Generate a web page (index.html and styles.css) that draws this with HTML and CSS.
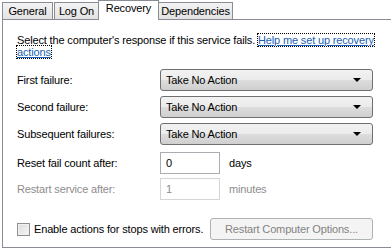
FILE: index.html
```html
<!DOCTYPE html>
<html>
<head>
<meta charset="utf-8">
<link rel="stylesheet" href="styles.css">
</head>
<body>
<div class="dialog">
  <div class="tabs">
    <div class="tab t-general">General</div>
    <div class="tab t-logon">Log On</div>
    <div class="tab sel t-recovery">Recovery</div>
    <div class="tab t-deps">Dependencies</div>
  </div>
  <div class="panel">
    <p class="intro">Select the computer's response if this service fails. <a class="link" href="#">Help me set up recovery</a><br><a class="link" href="#">actions</a></p>
    <div class="row r1">
      <span class="label">First failure:</span>
      <div class="combo"><span>Take No Action</span><i class="arrow"></i></div>
    </div>
    <div class="row">
      <span class="label">Second failure:</span>
      <div class="combo"><span>Take No Action</span><i class="arrow"></i></div>
    </div>
    <div class="row">
      <span class="label">Subsequent failures:</span>
      <div class="combo"><span>Take No Action</span><i class="arrow"></i></div>
    </div>
    <div class="row r4">
      <span class="label">Reset fail count after:</span>
      <div class="input">0</div>
      <span class="unit">days</span>
    </div>
    <div class="row r5 disabled">
      <span class="label">Restart service after:</span>
      <div class="input">1</div>
      <span class="unit">minutes</span>
    </div>
    <div class="bottom">
      <label class="check"><span class="box"></span>Enable actions for stops with errors.</label>
      <div class="button">Restart Computer Options...</div>
    </div>
  </div>
</div>
</body>
</html>
```

FILE: styles.css
```css
html, body {
  margin: 0;
  padding: 0;
  background: #ffffff;
}
body {
  width: 391px;
  height: 248px;
  overflow: hidden;
  font-family: "Liberation Sans", Arial, sans-serif;
  font-size: 11px;
  letter-spacing: -0.15px;
  color: #000;
}
.dialog {
  padding-left: 2px;
}
.tabs {
  display: flex;
  align-items: flex-end;
  height: 19px;
  position: relative;
  z-index: 1;
}
.tab {
  box-sizing: border-box;
  height: 17px;
  border: 1px solid #898c95;
  border-bottom: none;
  background: linear-gradient(#f3f3f3, #e3e3e3);
  margin-right: 1px;
  padding-top: 2px;
  text-align: center;
  line-height: 13px;
  white-space: nowrap;
}
.t-general { width: 51px; }
.t-logon { width: 45px; }
.t-recovery { width: 61px; }
.t-deps { width: 75px; }
.tab.sel {
  height: 20px;
  margin-left: -2px;
  margin-right: -1px;
  background: #fff;
  padding-top: 1px;
  margin-bottom: -1px;
}
.panel {
  box-sizing: border-box;
  height: 229px;
  border-left: 1px solid #898c95;
  border-top: 1px solid #898c95;
  border-bottom: 1px solid #898c95;
  padding: 14px 0 0 14px;
}
.intro {
  margin: 0;
  width: 360px;
  line-height: 12px;
}
.link {
  color: #1a5fb4;
  text-decoration: underline;
  outline: 1px dotted #000;
}
.row {
  display: flex;
  align-items: center;
  height: 22px;
  margin-top: 5px;
}
.row.r1 { margin-top: 11px; }
.row.r4 { margin-top: 7px; }
.row.r5 { margin-top: 4px; }
.label {
  width: 143px;
}
.combo {
  box-sizing: border-box;
  width: 213px;
  height: 22px;
  border: 1px solid #707070;
  border-radius: 3px;
  background: linear-gradient(#f2f2f2 0%, #ebebeb 50%, #dddddd 51%, #cfcfcf 100%);
  display: flex;
  align-items: center;
  justify-content: space-between;
  padding: 0 11px 0 5px;
}
.arrow {
  width: 0;
  height: 0;
  border-left: 4px solid transparent;
  border-right: 4px solid transparent;
  border-top: 4px solid #000;
}
.input {
  box-sizing: border-box;
  width: 60px;
  height: 22px;
  border: 1px solid #abadb3;
  padding: 4px 0 0 5px;
  background: #fff;
}
.unit {
  margin-left: 9px;
}
.disabled .label, .disabled .unit, .disabled .input {
  color: #8d8d8d;
}
.disabled .input {
  border-color: #d5d5d5;
}
.bottom {
  display: flex;
  align-items: center;
  margin-top: 18px;
}
.check {
  display: flex;
  align-items: center;
  width: 193px;
  white-space: nowrap;
}
.box {
  box-sizing: border-box;
  width: 13px;
  height: 13px;
  border: 1px solid #8e8f8f;
  background: linear-gradient(135deg, #dcdcdc, #f6f6f6);
  margin-right: 4px;
  box-shadow: inset 0 0 0 1px #f0f0f0;
  flex: none;
}
.button {
  box-sizing: border-box;
  width: 163px;
  height: 22px;
  border: 1px solid #adb2b5;
  border-radius: 3px;
  background: #f4f4f4;
  color: #838383;
  text-align: center;
  line-height: 20px;
}
```
